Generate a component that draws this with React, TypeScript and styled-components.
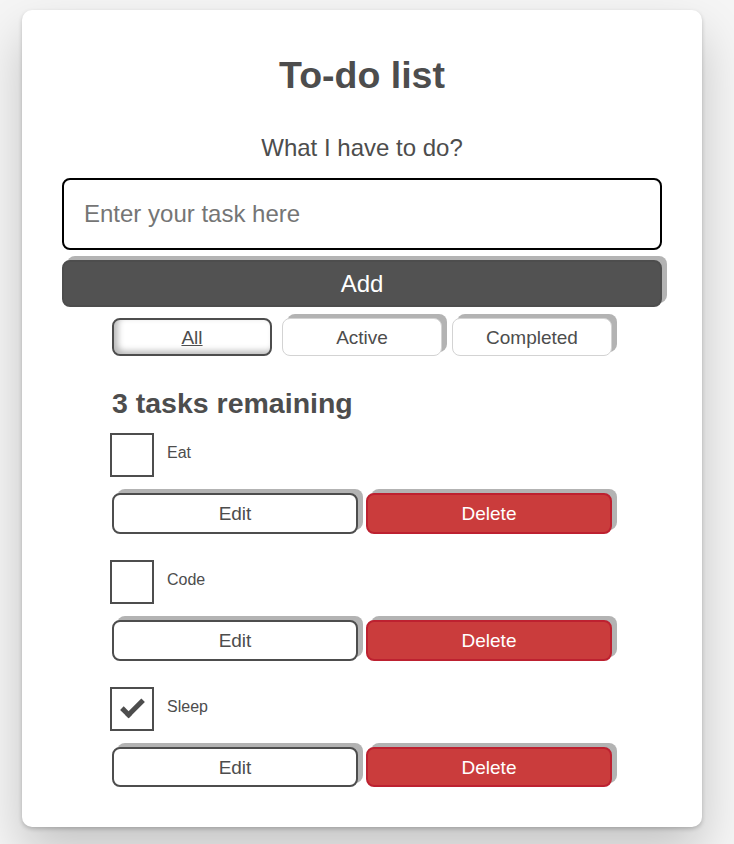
import React, { useState } from "react";
import styled, { createGlobalStyle, css } from "styled-components";

const GlobalStyle = createGlobalStyle`
  *, *::before, *::after { box-sizing: border-box; }
  html, body { margin: 0; padding: 0; }
  body {
    background: #f5f5f5;
    color: #4d4d4d;
    font-family: "Liberation Sans", Arial, sans-serif;
    font-size: 19px;
    line-height: 1.31579;
  }
`;

const Page = styled.div`
  padding: 10px 0 17px 22px;
`;

const Card = styled.div`
  width: 680px;
  background: #fff;
  border-radius: 10px;
  padding: 40px;
  box-shadow: 0 2px 4px 0 rgba(0, 0, 0, 0.2), 0 25px 50px 0 rgba(0, 0, 0, 0.2);
`;

const Title = styled.h1`
  margin: 0;
  font-size: 37.5px;
  line-height: 50px;
  font-weight: 700;
  text-align: center;
`;

const Form = styled.form`
  margin-top: 28px;
`;

const Prompt = styled.h2`
  margin: 0 0 10px;
  padding: 8px;
  font-size: 24px;
  font-weight: 400;
  line-height: 1.01567;
  text-align: center;
`;

const TaskInput = styled.input`
  display: block;
  width: 100%;
  margin: 0 0 10px;
  padding: 20px;
  border: 2px solid #000;
  border-radius: 8px;
  font-family: inherit;
  font-size: 24px;
  line-height: 1.15;
  color: #4d4d4d;
  outline: none;
  &::placeholder { color: #757575; }
`;

const baseButton = css`
  appearance: none;
  margin: 0;
  cursor: pointer;
  font-family: inherit;
  line-height: 1.15;
  padding: 8px 10px 7px;
  border-radius: 8px;
  box-shadow: 5px -4px 0 #b3b3b3;
`;

const AddButton = styled.button`
  ${baseButton};
  display: block;
  width: 100%;
  font-size: 24px;
  background: #525252;
  color: #fff;
  border: 2px solid #4d4d4d;
`;

const Filters = styled.div`
  display: grid;
  grid-template-columns: repeat(3, 1fr);
  gap: 10px;
  width: 500px;
  margin: 11px auto 0;
`;

const FilterButton = styled.button<{ $pressed?: boolean }>`
  ${baseButton};
  font-size: 19px;
  background: #fff;
  color: #4d4d4d;
  border: 1px solid #d3d3d3;
  padding: 8px 10px 7px;
  ${(p) =>
    p.$pressed &&
    css`
      border: 2px solid #4d4d4d;
      padding: 7px 10px 6px;
      text-decoration: underline;
      box-shadow: inset 4px -3px 6px rgba(0, 0, 0, 0.28);
    `}
`;

const ListHeading = styled.h2`
  width: 500px;
  margin: 29px auto 0;
  font-size: 28.5px;
  line-height: 1.31579;
  font-weight: 700;
`;

const TodoList = styled.ul`
  list-style: none;
  width: 500px;
  margin: 12px auto 0;
  padding: 0;
  display: flex;
  flex-direction: column;
  gap: 28px;
`;

const TodoItem = styled.li`
  display: flex;
  flex-direction: column;
  gap: 14px;
`;

const CheckRow = styled.div`
  position: relative;
  min-height: 44px;
  padding-left: 40px;
  font-size: 16px;
  line-height: 1.25;
`;

const HiddenCheckbox = styled.input`
  position: absolute;
  top: -2px;
  left: -2px;
  width: 44px;
  height: 44px;
  margin: 0;
  opacity: 0;
  z-index: 1;
  cursor: pointer;
`;

const CheckLabel = styled.label<{ $checked: boolean }>`
  display: inline-block;
  padding: 8px 15px 5px;
  cursor: pointer;
  &::before {
    content: "";
    position: absolute;
    top: -2px;
    left: -2px;
    width: 44px;
    height: 44px;
    border: 2px solid currentColor;
  }
  &::after {
    content: "";
    box-sizing: content-box;
    position: absolute;
    top: 11px;
    left: 9px;
    width: 18px;
    height: 7px;
    transform: rotate(-45deg);
    border: solid;
    border-width: 0 0 5px 5px;
    border-top-color: transparent;
    opacity: ${(p) => (p.$checked ? 1 : 0)};
  }
`;

const ButtonGroup = styled.div`
  display: grid;
  grid-template-columns: 1fr 1fr;
  gap: 8px;
`;

const ActionButton = styled.button<{ $danger?: boolean }>`
  ${baseButton};
  font-size: 19px;
  border: 2px solid #4d4d4d;
  background: #fff;
  color: #4d4d4d;
  ${(p) =>
    p.$danger &&
    css`
      background: #ca3c3c;
      border-color: #bd2130;
      color: #fff;
    `}
`;

type Task = { id: string; name: string; completed: boolean };

const initialTasks: Task[] = [
  { id: "todo-0", name: "Eat", completed: false },
  { id: "todo-1", name: "Code", completed: false },
  { id: "todo-2", name: "Sleep", completed: true },
];

export default function App() {
  const [tasks, setTasks] = useState<Task[]>(initialTasks);
  const [filter, setFilter] = useState("All");

  const toggle = (id: string) =>
    setTasks((t) => t.map((x) => (x.id === id ? { ...x, completed: !x.completed } : x)));

  return (
    <>
      <GlobalStyle />
      <Page>
        <Card>
          <Title>To-do list</Title>
          <Form onSubmit={(e) => e.preventDefault()}>
            <Prompt>
              <label htmlFor="new-todo-input">What I have to do?</label>
            </Prompt>
            <TaskInput id="new-todo-input" type="text" placeholder="Enter your task here" autoComplete="off" />
            <AddButton type="submit">Add</AddButton>
          </Form>
          <Filters>
            {["All", "Active", "Completed"].map((f) => (
              <FilterButton key={f} type="button" $pressed={filter === f} aria-pressed={filter === f} onClick={() => setFilter(f)}>
                {f}
              </FilterButton>
            ))}
          </Filters>
          <ListHeading>3 tasks remaining</ListHeading>
          <TodoList>
            {tasks.map((t) => (
              <TodoItem key={t.id}>
                <CheckRow>
                  <HiddenCheckbox id={t.id} type="checkbox" checked={t.completed} onChange={() => toggle(t.id)} />
                  <CheckLabel htmlFor={t.id} $checked={t.completed}>
                    {t.name}
                  </CheckLabel>
                </CheckRow>
                <ButtonGroup>
                  <ActionButton type="button">Edit</ActionButton>
                  <ActionButton type="button" $danger>
                    Delete
                  </ActionButton>
                </ButtonGroup>
              </TodoItem>
            ))}
          </TodoList>
        </Card>
      </Page>
    </>
  );
}
